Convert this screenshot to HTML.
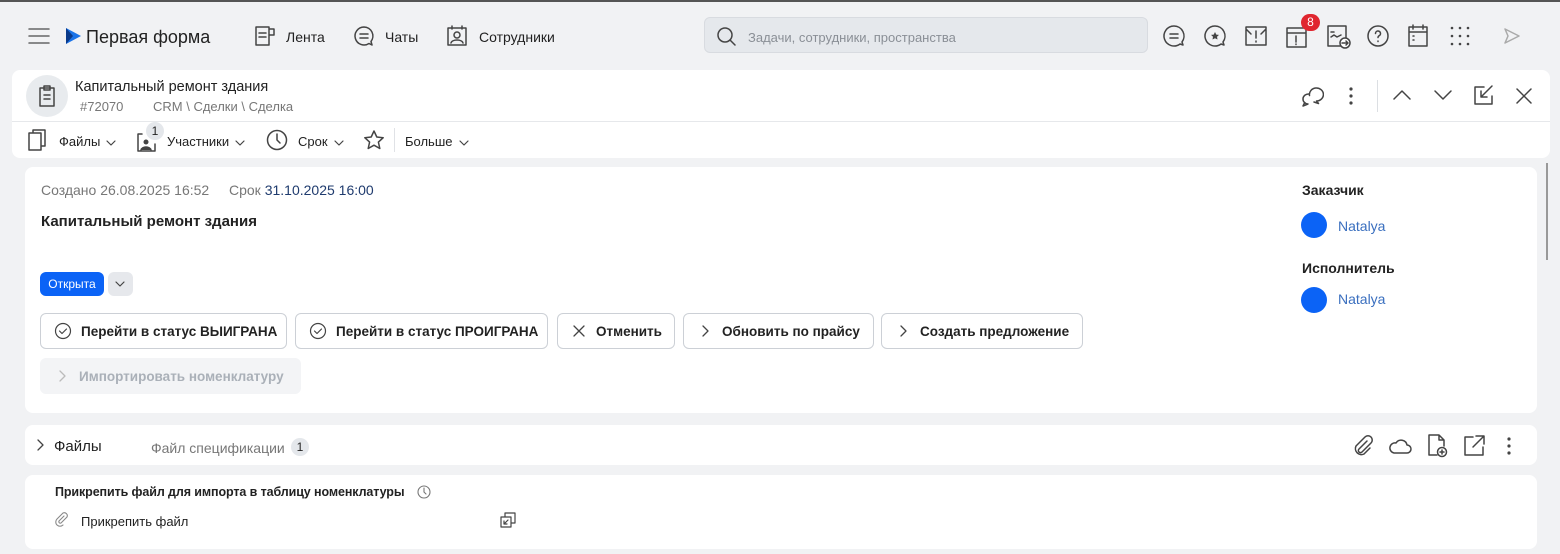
<!DOCTYPE html>
<html><head><meta charset="utf-8"><style>
*{box-sizing:border-box;margin:0;padding:0}
body{width:1560px;height:554px;overflow:hidden;background:#f1f2f4;font-family:"Liberation Sans","Noto Sans CJK SC",sans-serif;color:#222;position:relative}
.a{position:absolute}
svg{fill:none;stroke:#444;stroke-width:1.5;stroke-linecap:round;stroke-linejoin:round}
.card{position:absolute;background:#fff;border-radius:8px}
.btn{position:absolute;top:313px;height:36px;border:1px solid #ccd0d6;border-radius:6px;background:#fff;font-size:13.5px;font-weight:bold;color:#222;display:flex;align-items:center;padding-left:13px;gap:9px;white-space:nowrap}
.t{font-size:14px}
.dd{display:inline-block;vertical-align:middle;margin-left:6px}
</style></head><body>
<div class="a" style="left:0;top:0;width:1560px;height:2px;background:#555"></div>
<svg class="a" style="left:28px;top:26px" width="22" height="20"><path d="M1 3h20M1 10h20M1 17h20" stroke="#666"/></svg>
<svg class="a" style="left:64px;top:27px" width="18" height="18"><path d="M2 1L17 9L2 17Z" fill="#1a73e8" stroke="none"/><path d="M2 1L9 9L2 17Z" fill="#0a3a8a" stroke="none"/></svg>
<div class="a" style="left:86px;top:27px;font-size:18px;color:#222">Первая форма</div>
<svg class="a" style="left:254px;top:25px" width="22" height="22"><path d="M2 2h13v18H2z M15 4h5v6h-5 M5 8h7M5 12h7"/></svg>
<div class="a t" style="left:286px;top:29px">Лента</div>
<svg class="a" style="left:353px;top:25px" width="22" height="22"><path d="M11 2a9 9 0 1 0 5 16.5L19 20l-1-3.5A9 9 0 0 0 11 2z M7 9h8M7 13h8"/></svg>
<div class="a t" style="left:385px;top:29px">Чаты</div>
<svg class="a" style="left:446px;top:25px" width="22" height="22"><path d="M2 3h18v17H2z M6 1v3M16 1v3"/><circle cx="11" cy="10" r="3"/><path d="M5 18c1-4 11-4 12 0"/></svg>
<div class="a t" style="left:479px;top:29px">Сотрудники</div>
<div class="a" style="left:704px;top:17px;width:444px;height:36px;background:#e5e8ec;border:1px solid #d8dbe0;border-radius:6px"></div>
<svg class="a" style="left:716px;top:26px" width="20" height="20"><circle cx="9" cy="9" r="7"/><path d="M14 14l5 5"/></svg>
<div class="a" style="left:748px;top:30px;font-size:13px;color:#8a8f96">Задачи, сотрудники, пространства</div>
<svg class="a" style="left:1162px;top:24px" width="24" height="24"><path d="M12 2a10 10 0 1 0 6 18l3 1-1-3A10 10 0 0 0 12 2z M8 10h8M8 14h8"/></svg>
<svg class="a" style="left:1203px;top:24px" width="24" height="24"><path d="M12 2a10 10 0 1 0 6 18l3 1-1-3A10 10 0 0 0 12 2z"/><path d="M12 8l1.3 2.6 2.7.3-2 1.9.5 2.7-2.5-1.3-2.5 1.3.5-2.7-2-1.9 2.7-.3z" fill="#444" stroke="none"/></svg>
<svg class="a" style="left:1244px;top:25px" width="24" height="22"><path d="M2 2h20v18H2z M2 4l5 5M22 4l-5 5M12 6v7M12 16v1"/></svg>
<svg class="a" style="left:1285px;top:25px" width="24" height="24"><path d="M2 3h19v19H2z M2 8h19 M11 11v6M11 19v.5"/></svg>
<div class="a" style="left:1301px;top:14px;width:19px;height:17px;border-radius:9px;background:#e0262f;color:#fff;font-size:12px;text-align:center;line-height:17px">8</div>
<svg class="a" style="left:1326px;top:24px" width="26" height="26"><path d="M2 2h18v20H2z M5 8h3M5 13l3-2 3 2 4-2"/><circle cx="19" cy="19" r="5" fill="#fff"/><path d="M16 19h6M20 17l2 2-2 2"/></svg>
<svg class="a" style="left:1366px;top:24px" width="24" height="24"><circle cx="12" cy="12" r="10"/><path d="M9.5 9.5a2.5 2.5 0 1 1 3.5 2.3c-.7.4-1 .9-1 1.7M12 17v.5"/></svg>
<svg class="a" style="left:1407px;top:24px" width="22" height="24"><path d="M2 3h18v19H2z M2 8h18 M6 1v4M16 1v4 M6 12h1M6 16h1"/></svg>
<svg class="a" style="left:1450px;top:26px" width="20" height="20"><g fill="#444" stroke="none"><circle cx="2" cy="2" r="1.3"/><circle cx="10" cy="2" r="1.3"/><circle cx="18" cy="2" r="1.3"/><circle cx="2" cy="10" r="1.3"/><circle cx="10" cy="10" r="1.3"/><circle cx="18" cy="10" r="1.3"/><circle cx="2" cy="18" r="1.3"/><circle cx="10" cy="18" r="1.3"/><circle cx="18" cy="18" r="1.3"/></g></svg>
<svg class="a" style="left:1503px;top:27px" width="18" height="18"><path d="M2 2l14 7-14 7 3-7z" stroke="#aaa"/></svg>
<!-- header card -->
<div class="card" style="left:12px;top:70px;width:1538px;height:88px"></div>
<div class="a" style="left:12px;top:121px;width:1538px;height:1px;background:#e6e8eb"></div>
<div class="a" style="left:26px;top:75px;width:42px;height:42px;border-radius:50%;background:#e8ebee"></div>
<svg class="a" style="left:36px;top:84px" width="22" height="24"><path d="M4 4h14v18H4z M8 2h6v4H8z M8 11h6M8 15h6"/></svg>
<div class="a" style="left:75px;top:79px;font-size:14.5px">Капитальный ремонт здания</div>
<div class="a" style="left:80px;top:99px;font-size:13px;color:#777">#72070</div>
<div class="a" style="left:153px;top:99px;font-size:13px;color:#777">CRM \ Сделки \ Сделка</div>
<svg class="a" style="left:1298px;top:83px" width="26" height="26"><path d="M11.5 12.5a7 6.5 0 1 1 7 5.5l2 2.5-4.5-1.5"/><path d="M11 11a5.5 5 0 1 0 -1 10l-5 2 1.5-3"/></svg>
<svg class="a" style="left:1346px;top:86px" width="10" height="20"><g fill="#444" stroke="none"><circle cx="5" cy="3" r="1.6"/><circle cx="5" cy="10" r="1.6"/><circle cx="5" cy="17" r="1.6"/></g></svg>
<div class="a" style="left:1377px;top:80px;width:1px;height:32px;background:#dcdfe3"></div>
<svg class="a" style="left:1392px;top:88px" width="20" height="14"><path d="M2 11l8-8 8 8"/></svg>
<svg class="a" style="left:1433px;top:88px" width="20" height="14"><path d="M2 3l8 8 8-8"/></svg>
<svg class="a" style="left:1472px;top:84px" width="24" height="22"><path d="M12 3H3v17h17v-8 M20 2L9 13 M9 7v6h6"/></svg>
<svg class="a" style="left:1515px;top:87px" width="18" height="18"><path d="M2 2l14 14M16 2L2 16"/></svg>
<!-- toolbar -->
<svg class="a" style="left:26px;top:128px" width="22" height="24"><path d="M7 5V2h12v16h-3 M3 5h12v17H3z"/></svg>
<div class="a" style="left:59px;top:134px;font-size:13px">Файлы<svg class="dd" width="10" height="8"><path d="M1 2l4 4 4-4" stroke-width="1.2"/></svg></div>
<svg class="a" style="left:136px;top:129px" width="22" height="24"><path d="M2 5h4M2 5v17h17v-7"/><circle cx="10" cy="13" r="2.5" fill="#444" stroke="none"/><path d="M5 21c1-4 9-4 10 0" fill="#444"/></svg>
<div class="a" style="left:146px;top:122px;width:18px;height:18px;border-radius:50%;background:#e4e7eb;font-size:12px;text-align:center;line-height:18px">1</div>
<div class="a" style="left:167px;top:134px;font-size:13px">Участники<svg class="dd" width="10" height="8"><path d="M1 2l4 4 4-4" stroke-width="1.2"/></svg></div>
<svg class="a" style="left:266px;top:129px" width="22" height="22"><circle cx="11" cy="11" r="9.5"/><path d="M11 5v6l3 3"/></svg>
<div class="a" style="left:298px;top:134px;font-size:13px">Срок<svg class="dd" width="10" height="8"><path d="M1 2l4 4 4-4" stroke-width="1.2"/></svg></div>
<svg class="a" style="left:363px;top:129px" width="22" height="22"><path d="M11 2l2.8 6 6.4.7-4.8 4.4 1.4 6.4L11 16.2 5.2 19.5l1.4-6.4L1.8 8.7 8.2 8z"/></svg>
<div class="a" style="left:394px;top:128px;width:1px;height:24px;background:#e0e2e6"></div>
<div class="a" style="left:405px;top:134px;font-size:13px">Больше<svg class="dd" width="10" height="8"><path d="M1 2l4 4 4-4" stroke-width="1.2"/></svg></div>
<div class="a" style="left:1546px;top:163px;width:2px;height:97px;background:#999"></div>
<!-- main card -->
<div class="card" style="left:25px;top:167px;width:1512px;height:246px"></div>
<div class="a" style="left:41px;top:182px;font-size:14px;color:#777">Создано 26.08.2025 16:52</div>
<div class="a" style="left:229px;top:182px;font-size:14px;color:#777">Срок <span style="color:#1f3b6e">31.10.2025 16:00</span></div>
<div class="a" style="left:41px;top:213px;font-size:15px;font-weight:bold">Капитальный ремонт здания</div>
<div class="a" style="left:40px;top:272px;width:64px;height:24px;border-radius:6px;background:#0b63f6;color:#fff;font-size:12px;line-height:24px;text-align:center">Открыта</div>
<div class="a" style="left:108px;top:272px;width:25px;height:24px;border-radius:6px;background:#e6e8ec"></div>
<svg class="a" style="left:114px;top:279px" width="12" height="10"><path d="M2 3l4 4 4-4" stroke-width="1.2"/></svg>
<div class="btn" style="left:40px;width:247px"><svg width="18" height="18"><circle cx="9" cy="9" r="7.5" stroke-width="1.2"/><path d="M5.5 9l2.5 2.5 4.5-4.5" stroke-width="1.2"/></svg>Перейти в статус ВЫИГРАНА</div>
<div class="btn" style="left:295px;width:253px"><svg width="18" height="18"><circle cx="9" cy="9" r="7.5" stroke-width="1.2"/><path d="M5.5 9l2.5 2.5 4.5-4.5" stroke-width="1.2"/></svg>Перейти в статус ПРОИГРАНА</div>
<div class="btn" style="left:557px;width:118px"><svg width="16" height="16"><path d="M3 3l10 10M13 3L3 13" stroke-width="1.3"/></svg>Отменить</div>
<div class="btn" style="left:683px;width:191px"><svg width="16" height="16"><path d="M6 3l5 5-5 5" stroke-width="1.3"/></svg>Обновить по прайсу</div>
<div class="btn" style="left:881px;width:202px"><svg width="16" height="16"><path d="M6 3l5 5-5 5" stroke-width="1.3"/></svg>Создать предложение</div>
<div class="btn" style="left:40px;top:358px;width:261px;background:#f3f4f6;border-color:#f3f4f6;color:#aab0b8"><svg width="16" height="16"><path d="M6 3l5 5-5 5" stroke="#bbb" stroke-width="1.3"/></svg>Импортировать номенклатуру</div>
<div class="a" style="left:1302px;top:182px;font-size:14px;font-weight:bold">Заказчик</div>
<div class="a" style="left:1301px;top:212px;width:26px;height:26px;border-radius:50%;background:#0b63f6"></div>
<div class="a" style="left:1338px;top:218px;font-size:14px;color:#3a6fbf">Natalya</div>
<div class="a" style="left:1302px;top:260px;font-size:14px;font-weight:bold">Исполнитель</div>
<div class="a" style="left:1301px;top:287px;width:26px;height:26px;border-radius:50%;background:#0b63f6"></div>
<div class="a" style="left:1338px;top:291px;font-size:14px;color:#3a6fbf">Natalya</div>
<!-- files card -->
<div class="card" style="left:25px;top:425px;width:1512px;height:40px"></div>
<svg class="a" style="left:35px;top:438px" width="10" height="14"><path d="M3 2l5 5-5 5" stroke-width="1.3"/></svg>
<div class="a" style="left:54px;top:438px;font-size:15px">Файлы</div>
<div class="a" style="left:151px;top:440px;font-size:14px;color:#777">Файл спецификации</div>
<div class="a" style="left:291px;top:438px;width:18px;height:18px;border-radius:50%;background:#e4e7eb;font-size:12px;text-align:center;line-height:18px">1</div>
<svg class="a" style="left:1352px;top:434px" width="22" height="24"><path d="M15 7l-8 8a2 2 0 0 0 3 3l9-9a4 4 0 0 0-6-6L4 12a6 6 0 0 0 8 8l6-6"/></svg>
<svg class="a" style="left:1387px;top:436px" width="26" height="20"><path d="M7 17h13a4 4 0 0 0 0-8 6 6 0 0 0-11-2 5 5 0 0 0-2 10z"/></svg>
<svg class="a" style="left:1426px;top:433px" width="24" height="26"><path d="M11 22H3V2h10l5 5v6 M13 2v5h5"/><circle cx="16" cy="19" r="4.5"/><path d="M16 17v4M14 19h4"/></svg>
<svg class="a" style="left:1462px;top:434px" width="24" height="24"><path d="M11 3H3v18h18v-8 M14 2h8v8M22 2L11 13"/></svg>
<svg class="a" style="left:1504px;top:436px" width="10" height="20"><g fill="#444" stroke="none"><circle cx="5" cy="3" r="1.6"/><circle cx="5" cy="10" r="1.6"/><circle cx="5" cy="17" r="1.6"/></g></svg>
<!-- attach card -->
<div class="card" style="left:25px;top:475px;width:1512px;height:74px"></div>
<div class="a" style="left:55px;top:485px;font-size:12.5px;font-weight:bold;letter-spacing:-0.1px">Прикрепить файл для импорта в таблицу номенклатуры</div>
<svg class="a" style="left:416px;top:484px" width="16" height="16"><circle cx="8" cy="8" r="6" stroke="#777" stroke-width="1.1"/><path d="M8 4v4l2 2" stroke="#777" stroke-width="1.1"/></svg>
<svg class="a" style="left:54px;top:512px" width="16" height="16"><path d="M10 4l-5 5a1.5 1.5 0 0 0 2 2l6-6a3 3 0 0 0-4-4L3 7a4 4 0 0 0 6 6" stroke="#888" stroke-width="1.1"/></svg>
<div class="a" style="left:81px;top:514px;font-size:13px">Прикрепить файл</div>
<svg class="a" style="left:499px;top:511px" width="18" height="18"><path d="M6 6V2h10v10h-4 M2 6h10v10H2z M5 13l4-4M5 10v3h3" stroke-width="1.2"/></svg>
</body></html>
